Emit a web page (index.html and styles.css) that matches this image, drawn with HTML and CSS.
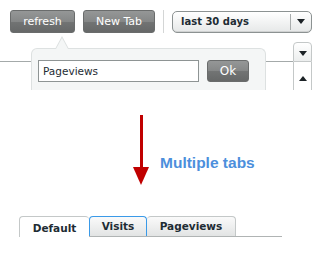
FILE: index.html
```html
<!DOCTYPE html>
<html lang="en">
<head>
    <meta charset="UTF-8">
    <title>Multiple tabs</title>
    <link rel="stylesheet" href="styles.css">
</head>
<body>
    <div class="toolbar">
        <button class="btn">refresh</button>
        <button class="btn">New Tab</button>
        <div class="sep"></div>
        <div class="select">
            <span class="select-label">last 30 days</span>
            <span class="select-arrow"><span class="tri-down"></span></span>
        </div>
    </div>

    <div class="panel">
        <div class="panel-head">
            <div class="panel-line"></div>
            <div class="menu-btn"><span class="tri-down"></span></div>
        </div>
        <div class="panel-body">
            <div class="scroll"><span class="tri-up"></span></div>
        </div>

        <div class="popup">
            <div class="notch"></div>
            <input class="tab-name" type="text" value="Pageviews">
            <button class="btn btn-ok">Ok</button>
        </div>
    </div>

    <div class="note">
        <svg class="arrow" width="16" height="70" viewBox="0 0 16 70">
            <rect x="7" y="0" width="3" height="54" fill="#c00000"/>
            <polygon points="0,52 16,52 8,70" fill="#c00000"/>
        </svg>
        <span class="note-text">Multiple tabs</span>
    </div>

    <div class="tabs">
        <div class="tab active">Default</div>
        <div class="tab focus">Visits</div>
        <div class="tab">Pageviews</div>
    </div>
</body>
</html>
```

FILE: styles.css
```css
* {
    margin: 0;
    padding: 0;
    box-sizing: border-box;
}

body {
    font-family: 'DejaVu Sans', Verdana, sans-serif;
    background: #fff;
    width: 324px;
    height: 280px;
    overflow: hidden;
}

.toolbar {
    display: flex;
    align-items: center;
    padding: 10px 0 0 10px;
    height: 33px;
}

.btn {
    font-family: 'DejaVu Sans', Verdana, sans-serif;
    font-size: 11px;
    color: #fff;
    width: 65px;
    height: 23px;
    border: 1px solid #6a6c6c;
    border-radius: 3px;
    background: linear-gradient(#959797 0%, #858787 50%, #727474 52%, #666868 100%);
    margin-right: 8px;
}

.btn + .btn {
    width: 72px;
}

.sep {
    width: 1px;
    height: 23px;
    background: #d4d6d6;
    margin-right: 8px;
}

.select {
    display: flex;
    align-items: center;
    width: 140px;
    height: 22px;
    border: 1px solid #8c9292;
    border-radius: 5px;
    background: linear-gradient(#ffffff, #e6e8e8);
    box-shadow: inset 0 -1px 0 #d0d2d2;
}

.select-label {
    flex: 1;
    font-size: 10px;
    font-weight: bold;
    color: #1e2c34;
    padding-left: 8px;
}

.select-arrow {
    display: flex;
    align-items: center;
    justify-content: center;
    width: 21px;
    height: 16px;
    border-left: 1px solid #a8acac;
}

.select-arrow .tri-down {
    margin-top: 0;
}

.panel {
    position: relative;
    margin-top: 9px;
    width: 312px;
    height: 48px;
}

.panel-head {
    display: flex;
    height: 20px;
}

.panel-line {
    flex: 1;
    border-bottom: 1px solid #a4aaaa;
}

.menu-btn,
.scroll {
    width: 19px;
    border: 1px solid #c4c8c8;
    background: linear-gradient(#ffffff, #eceeee);
    display: flex;
    justify-content: center;
}

.menu-btn {
    height: 20px;
    border-radius: 4px 4px 0 0;
    align-items: center;
}

.panel-body {
    display: flex;
    justify-content: flex-end;
    height: 28px;
}

.scroll {
    height: 28px;
    border-top: none;
    border-bottom: none;
    background: #fff;
    align-items: flex-end;
    padding-bottom: 9px;
}

.tri-down {
    border-left: 4px solid transparent;
    border-right: 4px solid transparent;
    border-top: 5px solid #1c2226;
    margin-top: 2px;
}

.tri-up {
    border-left: 4px solid transparent;
    border-right: 4px solid transparent;
    border-bottom: 5px solid #1c2226;
}

.popup {
    position: absolute;
    left: 31px;
    top: 6px;
    width: 235px;
    height: 42px;
    border: 1px solid #dde1e1;
    border-bottom: none;
    border-radius: 6px 6px 0 0;
    background: #f4f6f6;
    display: flex;
    align-items: flex-start;
    padding: 11px 0 0 6px;
}

.notch {
    position: absolute;
    left: 23px;
    top: -13px;
    width: 0;
    height: 0;
    border-left: 7px solid transparent;
    border-right: 7px solid transparent;
    border-bottom: 13px solid #dde1e1;
}

.notch::after {
    content: '';
    position: absolute;
    left: -6px;
    top: 2px;
    border-left: 6px solid transparent;
    border-right: 6px solid transparent;
    border-bottom: 11px solid #f4f6f6;
}

.tab-name {
    width: 161px;
    height: 22px;
    border: 1px solid #8e9494;
    background: #fff;
    font-family: 'DejaVu Sans', Verdana, sans-serif;
    font-size: 10.5px;
    color: #1e2c34;
    padding-left: 4px;
    margin-right: 8px;
}

.btn.btn-ok {
    width: 42px;
    height: 22px;
    font-size: 12px;
    margin: 0;
}

.note {
    display: flex;
    align-items: flex-start;
    padding-left: 133px;
    margin-top: 25px;
}

.arrow {
    display: block;
}

.note-text {
    font-family: 'Liberation Sans', Arial, sans-serif;
    font-size: 15.5px;
    font-weight: bold;
    color: #4c8fdc;
    margin: 39px 0 0 11px;
}

.tabs {
    display: flex;
    align-items: flex-start;
    margin: 31px 0 0 19px;
    width: 263px;
    height: 21px;
    border-bottom: 1px solid #b0b4b4;
}

.tab {
    height: 20px;
    padding: 0 8px;
    font-size: 10.5px;
    font-weight: bold;
    line-height: 18px;
    color: #1e2c34;
    border: 1px solid #c4c8c8;
    border-bottom: none;
    border-radius: 4px 4px 0 0;
    background: linear-gradient(#fafafa, #e2e4e4);
}

.tab.active {
    width: 70px;
    height: 21px;
    line-height: 22px;
    text-align: center;
    background: #fff;
    border-right: none;
}

.tab.focus {
    width: 58px;
    text-align: center;
    border-color: #3a9ae8;
}

.tab + .tab + .tab {
    width: 89px;
    text-align: center;
    border-left: none;
}
```
